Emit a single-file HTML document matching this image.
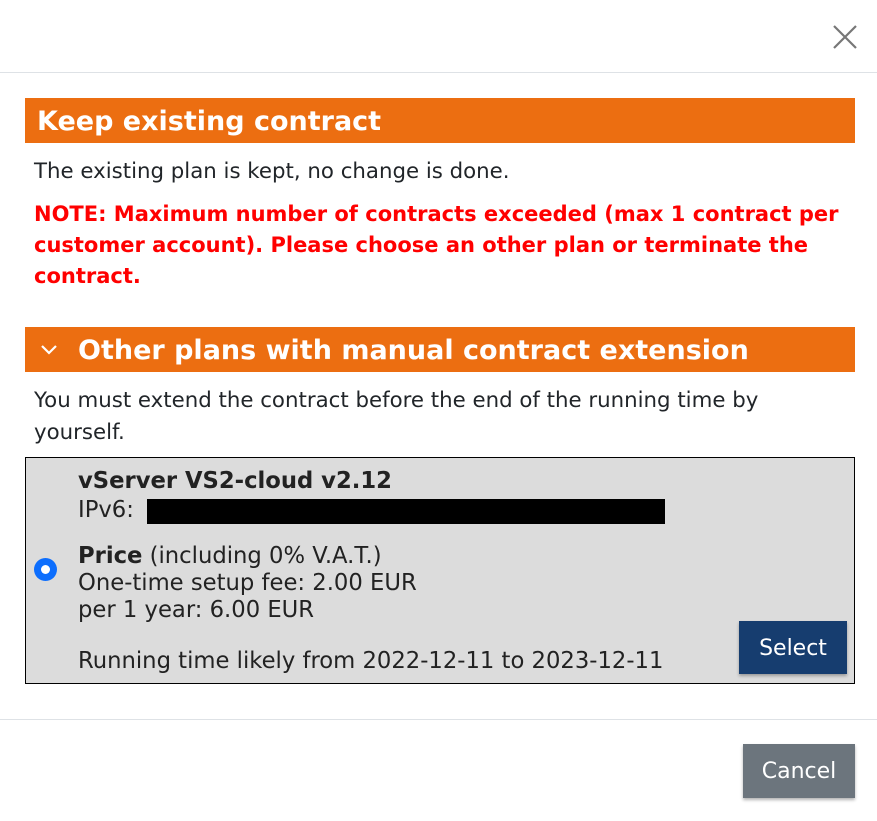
<!DOCTYPE html>
<html><head><style>
*{margin:0;padding:0;box-sizing:border-box}
body{width:877px;height:821px;background:#fff;font-family:"DejaVu Sans","Liberation Sans",sans-serif;color:#212529;position:relative;overflow:hidden;font-size:21.3px}
.a{position:absolute;white-space:nowrap}
.bar{position:absolute;left:25px;width:830px;background:#ec6e11;color:#fff;font-weight:bold;font-size:27px}
.red{color:#f00;font-weight:bold;font-size:21px;line-height:31px}
.box{position:absolute;left:25px;top:457px;width:830px;height:227px;background:#dcdcdc;border:1px solid #000}
.bx{font-size:22.7px;color:#222}
</style></head><body>
<div class="a" style="left:0;top:72px;width:877px;height:1px;background:#dee2e6"></div>
<svg class="a" style="left:832px;top:24px" width="26" height="26" viewBox="0 0 26 26"><path d="M2 2L24 24M24 2L2 24" stroke="#777" stroke-width="2.2" fill="none"/></svg>
<div class="bar" style="top:98px;height:45px;line-height:47px;padding-left:12px">Keep existing contract</div>
<div class="a" style="left:34px;top:156px;line-height:31px">The existing plan is kept, no change is done.</div>
<div class="a red" style="left:34px;top:199px">NOTE: Maximum number of contracts exceeded (max 1 contract per<br>customer account). Please choose an other plan or terminate the<br>contract.</div>
<div class="bar" style="top:327px;height:45px;line-height:47px;padding-left:53px">Other plans with manual contract extension</div>
<svg class="a" style="left:39px;top:343px" width="20" height="14" viewBox="0 0 20 14"><path d="M3 3L10 10L17 3" stroke="#fff" stroke-width="2.2" fill="none"/></svg>
<div class="a" style="left:34px;top:385px;line-height:32px">You must extend the contract before the end of the running time by<br>yourself.</div>
<div class="box"></div>
<div class="a bx" style="left:78px;top:467px;line-height:29px"><b>vServer VS2-cloud v2.12</b><br>IPv6:</div>
<div class="a" style="left:147px;top:499px;width:518px;height:25px;background:#000"></div>
<div class="a bx" style="left:78px;top:543px;line-height:27px"><b>Price</b> (including 0% V.A.T.)<br>One-time setup fee: 2.00 EUR<br>per 1 year: 6.00 EUR</div>
<div class="a bx" style="left:78px;top:647px;line-height:28px">Running time likely from 2022-12-11 to 2023-12-11</div>
<div class="a" style="left:34px;top:558px;width:23px;height:23px;border-radius:50%;background:#0d6efd"></div>
<div class="a" style="left:41px;top:565px;width:9px;height:9px;border-radius:50%;background:#fff"></div>
<div class="a" style="left:739px;top:621px;width:108px;height:53px;background:#163d6f;color:#fff;line-height:55px;text-align:center;font-size:22px;box-shadow:0 2px 3px rgba(0,0,0,.3)">Select</div>
<div class="a" style="left:0;top:719px;width:877px;height:1px;background:#dee2e6"></div>
<div class="a" style="left:743px;top:744px;width:112px;height:54px;background:#6c757d;color:#fff;line-height:56px;text-align:center;font-size:22px;box-shadow:0 2px 3px rgba(0,0,0,.3)">Cancel</div>
</body></html>
